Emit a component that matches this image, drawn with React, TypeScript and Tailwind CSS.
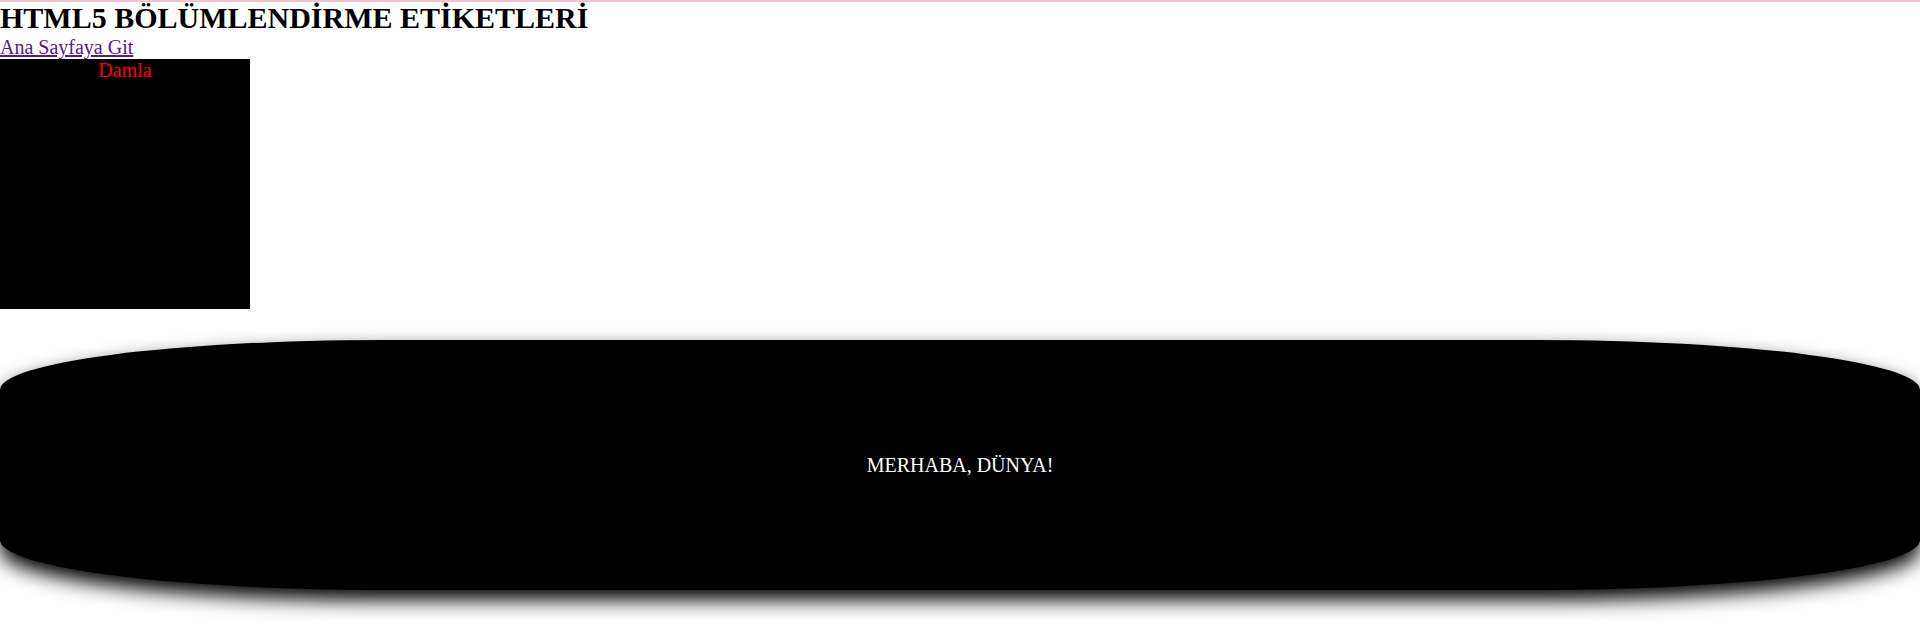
export default function App() {
  return (
    <div className="relative min-h-[630px] bg-white font-['Liberation_Serif',serif] text-black">
      {/* thin pink rule across the very top */}
      <div className="absolute inset-x-0 top-0 h-[2px] bg-[#f3c4cc]" />

      <h1 className="m-0 text-[30px] font-bold leading-[36px]">HTML5 BÖLÜMLENDİRME ETİKETLERİ</h1>

      <div className="h-[23px] text-[20px] leading-[23px]">
        <a href="#" className="text-[#551a8b] underline">
          Ana Sayfaya Git
        </a>
      </div>

      <div className="h-[250px] w-[250px] bg-black text-center text-[20px] leading-[23px] text-[#ff0000]">
        Damla
      </div>

      <div className="mt-[31px] flex h-[250px] w-full items-center justify-center rounded-[20%] bg-black text-[20px] text-white shadow-[0_10px_20px_black]">
        MERHABA, DÜNYA!
      </div>
    </div>
  )
}
